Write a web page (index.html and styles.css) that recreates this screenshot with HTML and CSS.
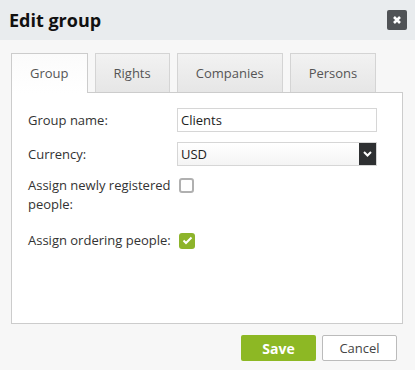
FILE: index.html
```html
<!DOCTYPE html>
<html lang="en">

<head>
  <meta charset="UTF-8">
  <meta name="viewport" content="width=device-width, initial-scale=1.0">
  <title>Edit group</title>
  <link rel="stylesheet" href="styles.css">
</head>

<body>
  <div class="dialog">
    <div class="dialog-head">
      <h1 class="dialog-title">Edit group</h1>
      <button class="close-btn" type="button">
        <svg width="10" height="10" viewBox="0 0 10 10"><path d="M2 2 L8 8 M8 2 L2 8" stroke="#fff" stroke-width="2.6"/></svg>
      </button>
    </div>
    <div class="dialog-body">
      <ul class="tabs">
        <li class="tab active">Group</li>
        <li class="tab">Rights</li>
        <li class="tab">Companies</li>
        <li class="tab">Persons</li>
      </ul>
      <div class="panel">
        <div class="form-row">
          <label class="form-label">Group name:</label>
          <input class="text-input" type="text" value="Clients">
        </div>
        <div class="form-row">
          <label class="form-label">Currency:</label>
          <div class="select">
            <span class="select-value">USD</span>
            <span class="select-arrow">
              <svg width="9" height="6" viewBox="0 0 9 6"><path d="M1 1 L4.5 4.5 L8 1" fill="none" stroke="#fff" stroke-width="2"/></svg>
            </span>
          </div>
        </div>
        <div class="form-row top">
          <label class="form-label">Assign newly registered people:</label>
          <span class="checkbox"></span>
        </div>
        <div class="form-row">
          <label class="form-label">Assign ordering people:</label>
          <span class="checkbox checked">
            <svg width="11" height="9" viewBox="0 0 11 9"><path d="M1.5 4.5 L4 7 L9.5 1.5" fill="none" stroke="#fff" stroke-width="2"/></svg>
          </span>
        </div>
      </div>
      <div class="actions">
        <button class="btn btn-save" type="button">Save</button>
        <button class="btn btn-cancel" type="button">Cancel</button>
      </div>
    </div>
  </div>
</body>

</html>
```

FILE: styles.css
```css
* {
  box-sizing: border-box;
}

body {
  margin: 0;
  background: #f7f7f7;
  font-family: "Open Sans", "Liberation Sans", sans-serif;
  font-size: 13px;
  color: #333;
}

.dialog-head {
  height: 40px;
  background: #e9ecee;
  display: flex;
  align-items: center;
  justify-content: space-between;
  padding: 0 8px 0 9px;
}

.dialog-title {
  margin: 0;
  font-size: 18px;
  font-weight: 700;
  color: #111;
}

.close-btn {
  width: 20px;
  height: 20px;
  border: 0;
  border-radius: 2px;
  background: #505356;
  padding: 0;
  display: flex;
  align-items: center;
  justify-content: center;
}

.dialog-body {
  padding: 13px 12px 0 11px;
}

.tabs {
  display: flex;
  gap: 7px;
  margin: 0;
  padding: 0;
  list-style: none;
}

.tab {
  height: 39px;
  line-height: 38px;
  padding: 0 18px;
  border: 1px solid #d4d4d4;
  border-bottom: 0;
  background: linear-gradient(#f2f2f2, #e6e6e6);
  color: #555;
}

.tab.active {
  position: relative;
  height: 40px;
  margin-bottom: -1px;
  background: linear-gradient(#fbfbfb, #fff);
  border-color: #ccc;
  z-index: 1;
}

.panel {
  height: 232px;
  background: #fff;
  border: 1px solid #ccc;
  padding: 15px 25px 0 16px;
}

.form-row {
  display: flex;
  align-items: center;
  margin-bottom: 10px;
}

.form-row.top {
  align-items: flex-start;
  margin-bottom: 17px;
}

.form-label {
  width: 149px;
  flex-shrink: 0;
  line-height: 19px;
  padding-right: 2px;
}

.text-input {
  width: 200px;
  height: 24px;
  border: 1px solid #d6d6d6;
  padding: 0 3px;
  font: inherit;
  color: #222;
}

.select {
  width: 200px;
  height: 24px;
  display: flex;
  border: 1px solid #d6d6d6;
  background: linear-gradient(#fff, #f4f4f4);
}

.select-value {
  flex-grow: 1;
  line-height: 22px;
  padding-left: 3px;
  color: #222;
}

.select-arrow {
  width: 17px;
  background: #2e3032;
  display: flex;
  align-items: center;
  justify-content: center;
}

.checkbox {
  width: 15px;
  height: 15px;
  margin: 2px 0 0 2px;
  border: 2px solid #b0b0b0;
  border-radius: 3px;
  display: flex;
  align-items: center;
  justify-content: center;
}

.checkbox.checked {
  width: 16px;
  height: 16px;
  border: 0;
  background: #8db42b;
  margin-top: 0;
}

.actions {
  display: flex;
  justify-content: flex-end;
  gap: 6px;
  padding: 11px 6px 0 0;
}

.btn {
  width: 75px;
  height: 26px;
  border-radius: 2px;
  font-family: inherit;
  padding: 0;
}

.btn-save {
  border: 0;
  background: #8db824;
  color: #fff;
  font-size: 14px;
  font-weight: 700;
}

.btn-cancel {
  border: 1px solid #bbb;
  background: #fff;
  color: #444;
  font-size: 13px;
}
```
